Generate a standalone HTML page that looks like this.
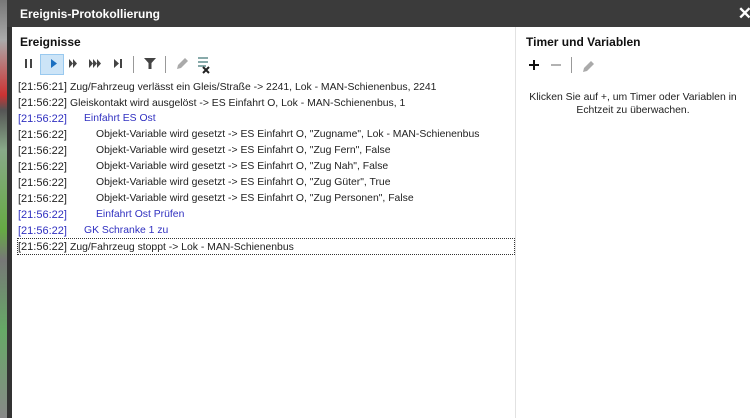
<!DOCTYPE html>
<html><head><meta charset="utf-8"><style>
*{margin:0;padding:0;box-sizing:border-box}
body{width:750px;height:418px;overflow:hidden;position:relative;background:#fff;font-family:"Liberation Sans",sans-serif;font-size:10.4px;color:#222}
.scene{position:absolute;left:0;top:0;width:8px;height:418px;background:linear-gradient(#777 0,#aaa 40px,#c33 95px,#555 110px,#8a8 150px,#6a4 230px,#777 260px,#6a6 330px,#888 418px)}
.bord{position:absolute;left:7px;top:0;width:5px;height:418px;background:#333}
.title{position:absolute;left:7px;top:0;width:743px;height:27px;background:#3b3b3b;color:#fff;font-weight:bold;font-size:12px;line-height:28px;padding-left:13px}
.close{position:absolute;right:-2px;top:0;color:#fff;font-size:17px;line-height:28px;font-weight:bold}
.h{position:absolute;font-weight:bold;font-size:12px;color:#111}
.div{position:absolute;left:515px;top:27px;width:1px;height:391px;background:#e2e2e2}
.row{position:absolute;left:18px;height:16px;line-height:16px;white-space:nowrap;font-size:11px}
.t{font-size:10.4px}
.b{color:#3030c0}
.sel{position:absolute;left:17px;top:238px;width:498px;height:17px;border:1px dotted #333}
</style></head><body>
<div class="scene"></div><div class="bord"></div>
<div class="title">Ereignis-Protokollierung<span class="close">✕</span></div>
<div class="h" style="left:20px;top:35px">Ereignisse</div>
<div class="h" style="left:526px;top:35px">Timer und Variablen</div>
<div class="div"></div>
<div style="position:absolute;left:40px;top:54px;width:24px;height:21px;background:#cce4f7;border:1px solid #99c9ef"></div>
<svg style="position:absolute;left:14px;top:50px" width="210" height="30">
<g fill="#444">
<rect x="11" y="9" width="2" height="9"/><rect x="16" y="9" width="2" height="9"/>
<path d="M37 9l6 4.5-6 4.5z" fill="#1b6fc0"/>
<path d="M55 9l4 4.5-4 4.5zM59 9l4 4.5-4 4.5z"/>
<path d="M75 9l4 4.5-4 4.5zM79 9l4 4.5-4 4.5zM83 9l4 4.5-4 4.5z"/>
<path d="M100 9l5 4.5-5 4.5z"/><rect x="106" y="9" width="2" height="9"/>
<path d="M130 8h12l-4.5 5v6h-3v-6z"/>
</g>
<rect x="119" y="6" width="1" height="17" fill="#999"/>
<rect x="151" y="6" width="1" height="17" fill="#999"/>
<path d="M163 19l1-4 7-7 3 3-7 7z" fill="#aaa"/>
<g fill="#8aa"><rect x="184" y="7" width="10" height="2"/><rect x="184" y="11" width="10" height="2"/><rect x="184" y="15" width="8" height="2"/></g>
<path d="M189 17l6 6M195 17l-6 6" stroke="#222" stroke-width="2"/>
</svg>
<div class="row" style="top:79px">[21:56:21] <span class="t">Zug/Fahrzeug verlässt ein Gleis/Straße -&gt; 2241, Lok - MAN-Schienenbus, 2241</span></div>
<div class="row" style="top:95px">[21:56:22] <span class="t">Gleiskontakt wird ausgelöst -&gt; ES Einfahrt O, Lok - MAN-Schienenbus, 1</span></div>
<div class="row b" style="top:111px">[21:56:22]</div><div class="row b t" style="top:111px;left:84px">Einfahrt ES Ost</div>
<div class="row" style="top:127px">[21:56:22]</div><div class="row t" style="top:127px;left:96px">Objekt-Variable wird gesetzt -&gt; ES Einfahrt O, "Zugname", Lok - MAN-Schienenbus</div>
<div class="row" style="top:143px">[21:56:22]</div><div class="row t" style="top:143px;left:96px">Objekt-Variable wird gesetzt -&gt; ES Einfahrt O, "Zug Fern", False</div>
<div class="row" style="top:159px">[21:56:22]</div><div class="row t" style="top:159px;left:96px">Objekt-Variable wird gesetzt -&gt; ES Einfahrt O, "Zug Nah", False</div>
<div class="row" style="top:175px">[21:56:22]</div><div class="row t" style="top:175px;left:96px">Objekt-Variable wird gesetzt -&gt; ES Einfahrt O, "Zug Güter", True</div>
<div class="row" style="top:191px">[21:56:22]</div><div class="row t" style="top:191px;left:96px">Objekt-Variable wird gesetzt -&gt; ES Einfahrt O, "Zug Personen", False</div>
<div class="row b" style="top:207px">[21:56:22]</div><div class="row b t" style="top:207px;left:96px">Einfahrt Ost Prüfen</div>
<div class="row b" style="top:223px">[21:56:22]</div><div class="row b t" style="top:223px;left:84px">GK Schranke 1 zu</div>
<div class="sel"></div>
<div class="row" style="top:239px">[21:56:22] <span class="t">Zug/Fahrzeug stoppt -&gt; Lok - MAN-Schienenbus</span></div>
<svg style="position:absolute;left:525px;top:55px" width="70" height="20">
<path d="M4 10h10M9 5v10" stroke="#111" stroke-width="2"/>
<path d="M26 10h10" stroke="#999" stroke-width="1.5"/>
<rect x="46" y="2" width="1" height="16" fill="#999"/>
<path d="M58 17l1-4 7-7 3 3-7 7z" fill="#aaa"/>
</svg>
<div style="position:absolute;left:516px;top:91px;width:234px;text-align:center;line-height:13px;color:#222">Klicken Sie auf +, um Timer oder Variablen in<br>Echtzeit zu überwachen.</div>
</body></html>
